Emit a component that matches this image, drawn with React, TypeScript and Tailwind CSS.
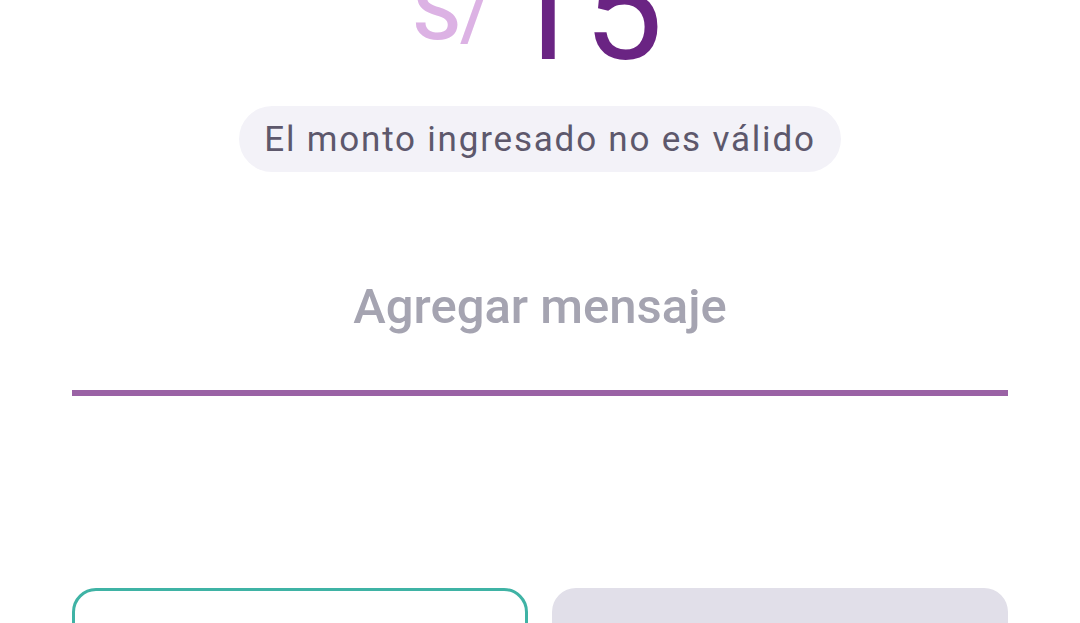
export default function App() {
    return (
        <div className="min-h-screen w-full bg-white overflow-hidden font-['Roboto',sans-serif]">
            {/* Amount */}
            <div className="mt-[-60px] flex justify-center items-start gap-[14px] pr-[4px]">
                <span className="mt-[34px] text-[78px] font-medium leading-none text-[#dcb2e4]">S/</span>
                <span className="text-[141px] leading-none text-[#6a2483]">15</span>
            </div>

            {/* Error pill */}
            <div className="mt-[25px] flex justify-center">
                <div className="h-[66px] px-[25px] flex items-center rounded-full bg-[#f3f2f8]">
                    <span className="text-[35px] leading-none tracking-[1.8px] text-[#5d586c]">
                        El monto ingresado no es válido
                    </span>
                </div>
            </div>

            {/* Message input */}
            <div className="mt-[110px] px-[72px]">
                <div className="text-center text-[49px] font-medium leading-none text-[#a5a4b1]">
                    Agregar mensaje
                </div>
                <div className="mt-[59px] h-[6px] bg-[#9a62a5]" />
            </div>

            {/* Buttons */}
            <div className="mt-[192px] px-[72px] grid grid-cols-2 gap-[24px]">
                <button className="h-[120px] rounded-[24px] border-[3px] border-[#3fb3a5] bg-white" />
                <button className="h-[120px] rounded-[24px] bg-[#e1dfe9]" />
            </div>
        </div>
    );
}
